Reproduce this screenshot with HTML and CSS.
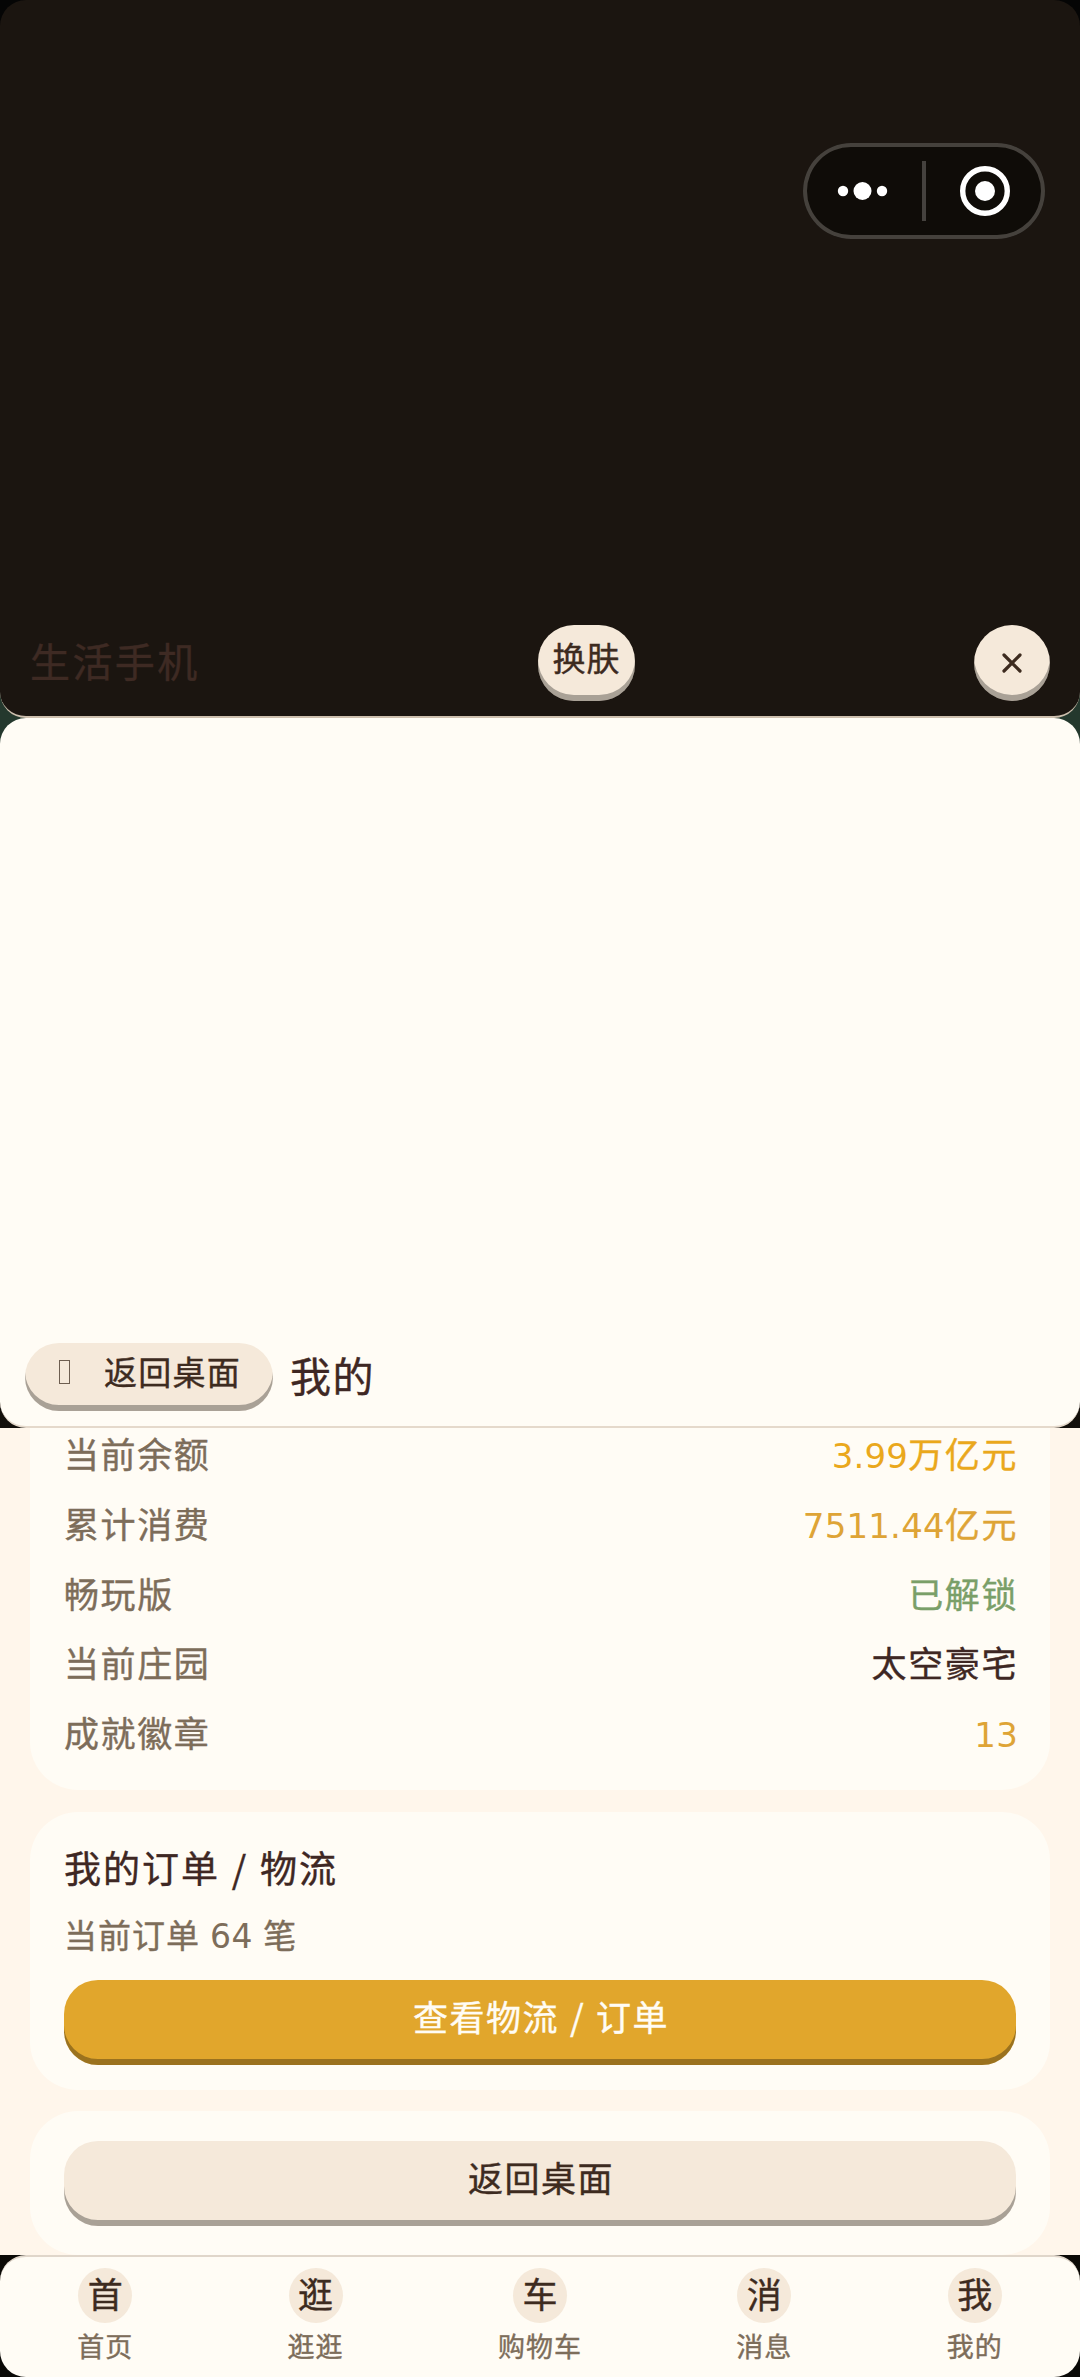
FILE: index.html
```html
<!DOCTYPE html>
<html lang="zh-CN">
<head>
<meta charset="utf-8">
<title>生活手机</title>
<link rel="stylesheet" href="styles.css">
</head>
<body>
<div class="phone">
  <header class="top">
    <div class="capsule">
      <svg width="242" height="96" viewBox="0 0 242 96">
        <g fill="#fff"><circle cx="40" cy="48" r="5.2"/><circle cx="59.5" cy="48" r="9"/><circle cx="79" cy="48" r="5.2"/><circle cx="182" cy="48" r="10"/></g>
        <rect x="119" y="18" width="4" height="60" fill="#45423e"/>
        <circle cx="182" cy="48" r="22.3" fill="none" stroke="#fff" stroke-width="5.4"/>
      </svg>
    </div>
    <div class="top-bar">
      <span class="brand">生活手机</span>
      <button class="key skin">换肤</button>
      <button class="key close"><svg width="20" height="20" viewBox="0 0 20 20"><path d="M2 2 18 18M18 2 2 18" stroke="#3d2b1f" stroke-width="3.2" stroke-linecap="round"/></svg></button>
    </div>
  </header>
  <section class="app-head">
    <button class="key back"><i class="glyph"></i>返回桌面</button>
    <h1>我的</h1>
  </section>
  <main>
    <section class="card stats">
      <div class="row"><span>当前余额</span><b class="bright"><em>3.99</em>万亿元</b></div>
      <div class="row"><span>累计消费</span><b class="gold"><em>7511.44</em>亿元</b></div>
      <div class="row"><span>畅玩版</span><b class="green">已解锁</b></div>
      <div class="row"><span>当前庄园</span><b>太空豪宅</b></div>
      <div class="row"><span>成就徽章</span><b class="gold"><em>13</em></b></div>
    </section>
    <section class="card orders">
      <h2>我的订单 / 物流</h2>
      <p>当前订单 <em>64</em> 笔</p>
      <button class="key wide primary">查看物流 / 订单</button>
    </section>
    <section class="card last">
      <button class="key wide">返回桌面</button>
    </section>
  </main>
  <nav>
    <a><i>首</i><span>首页</span></a>
    <a><i>逛</i><span>逛逛</span></a>
    <a><i>车</i><span>购物车</span></a>
    <a><i>消</i><span>消息</span></a>
    <a><i>我</i><span>我的</span></a>
  </nav>
</div>
</body>
</html>
```
FILE: styles.css
```css
* { box-sizing: border-box; margin: 0; padding: 0; }
body {
  font-family: "Noto Sans CJK SC", "Noto Sans", sans-serif;
  color: #3e2723;
  background: #0c0a07;
  -webkit-text-stroke: .4px;
}
h1, h2, b { font-weight: 400; }
em, i { font-style: normal; }
em { font-family: "DejaVu Sans", sans-serif; letter-spacing: .7px; -webkit-text-stroke: 0; }

.phone {
  display: flex;
  flex-direction: column;
  width: 1080px;
  height: 2377px;
  overflow: hidden;
  background: linear-gradient(#050505 0 600px, #24382d 690px 760px, #14100c 1300px, #0a0906 2377px);
}

.top {
  display: flex;
  flex-direction: column;
  justify-content: space-between;
  height: 718px;
  padding: 143px 30px 15px;
  border-bottom: 2px solid #cdbfae;
  border-radius: 26px;
  background: #1b1510;
}
.capsule {
  align-self: flex-end;
  width: 242px;
  height: 96px;
  margin-right: 5px;
  border-radius: 48px;
  background: #0f0c08;
  box-shadow: inset 0 0 0 4px #45413c;
}
.capsule svg { display: block; }
.top-bar {
  display: flex;
  align-items: flex-start;
  justify-content: space-between;
  height: 76px;
}
.brand { width: 169px; white-space: nowrap; font-size: 40px; letter-spacing: 2.4px; line-height: 70px; color: #3e2a23; }

.key {
  display: flex;
  align-items: center;
  justify-content: center;
  border: 0;
  font-family: inherit;
  color: #3d2b1f;
  background: #f5e9da;
  box-shadow: inset 0 -6px rgba(0, 0, 0, .31);
}
.skin { width: 97px; height: 76px; padding-bottom: 13px; border-radius: 36px; font-size: 33px; letter-spacing: 1px; }
.close { width: 76px; height: 76px; border-radius: 38px; }

.app-head {
  display: flex;
  align-items: flex-end;
  gap: 17px;
  height: 710px;
  padding: 0 25px 15px;
  border-bottom: 2px solid #e5d9cb;
  border-radius: 26px;
  background: #fffcf5;
}
.back { width: 248px; height: 68px; padding: 0 0 13px; border-radius: 34px; font-size: 33px; letter-spacing: 1.2px; }
.glyph { width: 11px; height: 24px; margin: 2px 34px 0 2px; border: 1px solid #6d5e50; }
h1 { font-size: 41px; letter-spacing: 1.5px; line-height: 74px; }

main {
  display: flex;
  flex-direction: column;
  gap: 22px;
  height: 827px;
  padding: 0 30px;
  overflow: hidden;
  background: #fff6eb;
}
.card { flex: none; padding: 0 34px; border-radius: 48px; background: #fffcf5; }
.stats { height: 362px; border-radius: 0 0 48px 48px; }
.row {
  display: flex;
  justify-content: space-between;
  height: 69.8px;
  margin-right: -2px;
  line-height: 50px;
  font-size: 35px;
  letter-spacing: 1.6px;
}
.row span, .orders p { color: #7d6d5a; }
.row em { font-size: 34px; letter-spacing: .2px; }
.bright { color: #eaa81c; }
.gold { color: #dea436; }
.green { color: #7a9f68; }

.orders { height: 278px; padding-top: 30px; }
h2 { height: 67px; line-height: 50px; font-size: 37px; letter-spacing: 2px; word-spacing: 1.5px; }
.orders p { height: 71px; line-height: 50px; font-size: 33px; letter-spacing: 1px; word-spacing: 1.5px; }
.wide { width: 100%; height: 85px; padding: 0 0 15px 2px; border-radius: 34px; font-size: 35px; letter-spacing: 1.5px; word-spacing: 1.5px; }
.primary { color: #fffcf5; background: #e1a62c; }
.last { height: 144px; margin-top: -1px; padding-top: 30px; }

nav {
  display: flex;
  justify-content: space-around;
  height: 122px;
  padding-top: 11px;
  border-top: 2px solid #e0d6ca;
  border-radius: 26px;
  background: #fffcf5;
}
nav a { display: flex; flex-direction: column; align-items: center; }
nav i {
  width: 54px;
  height: 55px;
  border-radius: 50%;
  font-size: 35px;
  line-height: 50px;
  text-align: center;
  color: #3d2b1f;
  background: #f5e9da;
}
nav span { font-size: 27px; line-height: 46px; letter-spacing: 1px; color: #7d6d5a; }
```
